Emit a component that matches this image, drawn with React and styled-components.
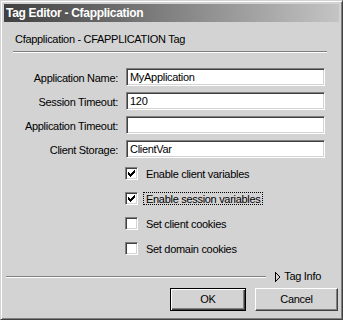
import React from "react";
import styled, { createGlobalStyle, css } from "styled-components";

const Global = createGlobalStyle`
  html, body { margin: 0; padding: 0; background: #d3d3d3; }
  * { box-sizing: border-box; }
`;

const FONT = `"Liberation Sans", Arial, sans-serif`;

const Window = styled.div`
  width: 343px;
  height: 320px;
  background: #d3d3d3;
  border-style: solid;
  border-width: 1px;
  border-color: #d3d3d3 #404040 #404040 #d3d3d3;
  box-shadow: inset 1px 1px 0 #ffffff, inset -1px -1px 0 #808080;
  padding: 3px;
  display: flex;
  flex-direction: column;
  font-family: ${FONT};
  font-size: 11px;
  letter-spacing: -0.3px;
  color: #000;
`;

const TitleBar = styled.div`
  height: 18px;
  flex: none;
  background: linear-gradient(to right, #404040, #c4c4c4);
  color: #fff;
  font-weight: bold;
  font-size: 12px;
  line-height: 18px;
  padding-left: 2px;
  letter-spacing: -0.3px;
  white-space: nowrap;
`;

const Subtitle = styled.div`
  margin: 11px 0 0 11px;
  line-height: 13px;
`;

const Separator = styled.div`
  height: 2px;
  border-top: 1px solid #808080;
  border-bottom: 1px solid #ffffff;
  ${(p) => p.$fill ? css`flex: 1;` : css`width: 314px;`}
  margin-left: ${(p) => p.$ml}px;
`;

const Form = styled.div`
  display: flex;
  flex-direction: column;
  gap: 6px;
  margin-top: 15px;
`;

const FieldRow = styled.div`
  display: flex;
  align-items: center;
  height: 18px;
  gap: 8px;
`;

const Label = styled.label`
  width: 114px;
  text-align: right;
  white-space: nowrap;
  line-height: 18px;
  padding-top: 1px;
`;

const TextBox = styled.div`
  width: 199px;
  height: 18px;
  background: #fff;
  border-style: solid;
  border-width: 1px;
  border-color: #808080 #ffffff #ffffff #808080;
  box-shadow: inset 1px 1px 0 #404040, inset -1px -1px 0 #d3d3d3;
  padding: 0 3px;
  line-height: 17px;
  white-space: nowrap;
`;

const Checks = styled.div`
  display: flex;
  flex-direction: column;
  gap: 12px;
  margin: 9px 0 0 121px;
`;

const CheckRow = styled.div`
  display: flex;
  align-items: center;
  height: 13px;
  gap: 5px;
`;

const Box = styled.span`
  width: 13px;
  height: 13px;
  flex: none;
  background: #fff;
  border-style: solid;
  border-width: 1px;
  border-color: #808080 #ffffff #ffffff #808080;
  box-shadow: inset 1px 1px 0 #404040, inset -1px -1px 0 #d3d3d3;
  display: flex;
  align-items: center;
  justify-content: center;
`;

const CheckText = styled.span`
  height: 13px;
  line-height: 12px;
  padding: 0 2px;
  border: 1px dotted ${(p) => (p.$focus ? "#000" : "transparent")};
  white-space: nowrap;
`;

const Footer = styled.div`
  display: flex;
  align-items: center;
  height: 13px;
  margin-top: 15px;
  padding-right: 18px;
`;

const TagInfo = styled.span`
  display: flex;
  align-items: center;
  gap: 3px;
  margin-left: 9px;
  white-space: nowrap;
  line-height: 13px;
`;

const Buttons = styled.div`
  display: flex;
  justify-content: flex-end;
  gap: 9px;
  margin-top: 5px;
  padding-right: 1px;
`;

const Button = styled.div`
  width: ${(p) => p.$w}px;
  height: 23px;
  display: flex;
  align-items: center;
  justify-content: center;
  background: #d3d3d3;
  line-height: 13px;
  ${(p) =>
    p.$default
      ? css`
          border: 1px solid #000;
          box-shadow: inset 1px 1px 0 #ffffff, inset -1px -1px 0 #404040,
            inset -2px -2px 0 #808080;
        `
      : css`
          border-style: solid;
          border-width: 1px;
          border-color: #ffffff #404040 #404040 #ffffff;
          box-shadow: inset -1px -1px 0 #808080;
        `}
`;

const Check = () => (
  <svg width="7" height="7" viewBox="0 0 7 7" shapeRendering="crispEdges">
    <path
      d="M6 0h1v1h-1zM5 1h2v1h-2zM0 2h1v1h-1zM4 2h3v1h-3zM0 3h2v1h-2zM3 3h3v1h-3zM0 4h5v1h-5zM1 5h3v1h-3zM2 6h1v1h-1z"
      fill="#000"
    />
  </svg>
);

const Triangle = () => (
  <svg width="6" height="10" viewBox="0 0 6 10" shapeRendering="crispEdges">
    <path d="M0.5 0.5 L0.5 9.5 L5 5 Z" fill="none" stroke="#000" strokeWidth="1" />
  </svg>
);

const fields = [
  ["Application Name:", "MyApplication"],
  ["Session Timeout:", "120"],
  ["Application Timeout:", ""],
  ["Client Storage:", "ClientVar"],
];

const checks = [
  ["Enable client variables", true, false],
  ["Enable session variables", true, true],
  ["Set client cookies", false, false],
  ["Set domain cookies", false, false],
];

export default function App() {
  return (
    <>
      <Global />
      <Window>
        <TitleBar>Tag Editor - Cfapplication</TitleBar>
        <Subtitle>Cfapplication - CFAPPLICATION Tag</Subtitle>
        <Separator $ml={9} style={{ marginTop: 5 }} />
        <Form>
          {fields.map(([l, v]) => (
            <FieldRow key={l}>
              <Label>{l}</Label>
              <TextBox>{v}</TextBox>
            </FieldRow>
          ))}
        </Form>
        <Checks>
          {checks.map(([t, c, f]) => (
            <CheckRow key={t}>
              <Box>{c && <Check />}</Box>
              <CheckText $focus={f}>{t}</CheckText>
            </CheckRow>
          ))}
        </Checks>
        <Footer>
          <Separator $fill $ml={2} />
          <TagInfo>
            <Triangle />
            Tag Info
          </TagInfo>
        </Footer>
        <Buttons>
          <Button $default $w={76}>OK</Button>
          <Button $w={83}>Cancel</Button>
        </Buttons>
      </Window>
    </>
  );
}
